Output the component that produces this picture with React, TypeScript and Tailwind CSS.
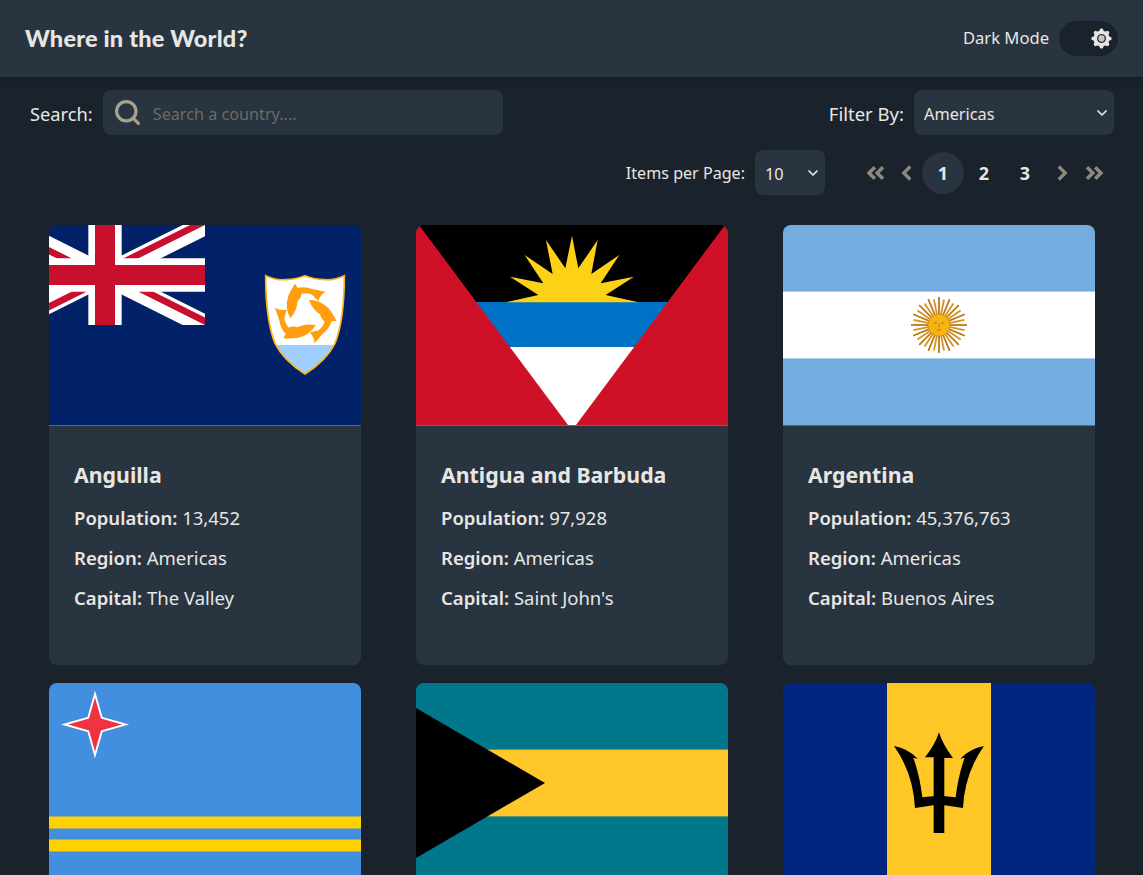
import React from "react";
import {ChevronDown, ChevronLeft, ChevronRight, ChevronsLeft, ChevronsRight, Search} from "lucide-react";

const shieldPath =
  "M32,32 Q62,46 90,44 Q125,42 150,32 Q175,42 210,44 Q238,46 268,32 C268,120 258,190 240,235 C220,275 185,305 150,327 C115,305 80,275 60,235 C42,190 32,120 32,32 Z";

function FlagAnguilla() {
  return (
    <svg viewBox="0 0 312 200" className="block w-full h-full">
      <defs>
        <clipPath id="ukA">
          <rect width="60" height="30" />
        </clipPath>
        <clipPath id="ukB">
          <path d="M30,15 h30 v15 z v15 h-30 z h-30 v-15 z v-15 h30 z" />
        </clipPath>
        <clipPath id="shieldClip">
          <path d={shieldPath} />
        </clipPath>
      </defs>
      <rect width="312" height="200" fill="#012169" />
      <g transform="translate(-44 0) scale(3.3333)" clipPath="url(#ukA)">
        <path d="M0,0 L60,30 M60,0 L0,30" stroke="#fff" strokeWidth="6" />
        <path d="M0,0 L60,30 M60,0 L0,30" stroke="#C8102E" strokeWidth="4" clipPath="url(#ukB)" />
        <path d="M30,0 v30 M0,15 h60" stroke="#fff" strokeWidth="10" />
        <path d="M30,0 v30 M0,15 h60" stroke="#C8102E" strokeWidth="6" />
      </g>
      <g transform="translate(206 40) scale(0.3333)">
        <path d={shieldPath} fill="#fff" />
        <rect x="30" y="240" width="240" height="90" fill="#9fcfff" clipPath="url(#shieldClip)" />
        <path d={shieldPath} fill="none" stroke="#fcb514" strokeWidth="5" />
        {[0, 120, 240].map((angle) => {
          return (
            <path
              key={angle}
              transform={`rotate(${angle} 150 148)`}
              d="M106,160 Q88,128 100,92 Q108,74 120,56 L128,68 Q152,64 172,72 L212,80 Q196,88 190,108 L170,88 Q152,82 140,86 Q138,100 127,110 Q127,134 106,160 Z"
              fill="#ff9e0f"
            />
          );
        })}
      </g>
    </svg>
  );
}

function FlagAntigua() {
  return (
    <svg viewBox="0 0 312 200" className="block w-full h-full">
      <rect width="312" height="200" fill="#000" />
      <rect y="77" width="312" height="45" fill="#0072c6" />
      <rect y="122" width="312" height="78" fill="#fff" />
      <g transform="translate(-6 -10) scale(0.3333)">
        <polygon
          fill="#fcd116"
          points="287,262 385,240 300,185 400,205 344,120 428,177 408,75 466,160 486,62 505,160 563,75 544,177 628,120 572,205 672,185 587,240 686,262"
        />
      </g>
      <polygon points="3,0 0,0 0,200 152,200" fill="#ce1126" />
      <polygon points="309,0 312,0 312,200 160,200" fill="#ce1126" />
    </svg>
  );
}

function FlagArgentina() {
  const rays = Array.from({length: 32}, (_, i) => i * 11.25);
  return (
    <svg viewBox="0 0 312 200" className="block w-full h-full">
      <rect width="312" height="200" fill="#74acdf" />
      <rect y="66.6" width="312" height="66.8" fill="#fff" />
      <g transform="translate(156 100)">
        {rays.map((angle, i) => {
          return (
            <line
              key={angle}
              transform={`rotate(${angle})`}
              x1="0"
              y1="-10"
              x2="0"
              y2={i % 2 ? -26 : -28}
              stroke={i % 2 ? "#d9921a" : "#b9791c"}
              strokeWidth="1.8"
            />
          );
        })}
        <circle r="11" fill="#f6b40e" stroke="#c98a12" strokeWidth="0.6" />
        <path d="M-5,-2 h3 M2,-2 h3 M0,-1 v3 M-2,5 h4" stroke="#a8660f" strokeWidth="0.8" fill="none" />
      </g>
    </svg>
  );
}

function FlagAruba() {
  return (
    <svg viewBox="0 0 312 200" className="block w-full h-full">
      <rect width="312" height="200" fill="#418fde" />
      <rect y="133.5" width="312" height="12" fill="#ffd100" />
      <rect y="156.5" width="312" height="12" fill="#ffd100" />
      <g transform="translate(46 41.5)">
        <polygon points="0,-34 7.5,-7.5 34,0 7.5,7.5 0,34 -7.5,7.5 -34,0 -7.5,-7.5" fill="#fff" />
        <polygon points="0,-27 6,-6 27,0 6,6 0,27 -6,6 -27,0 -6,-6" fill="#ef3340" />
      </g>
    </svg>
  );
}

function FlagBahamas() {
  return (
    <svg viewBox="0 0 312 200" className="block w-full h-full">
      <rect width="312" height="200" fill="#00778b" />
      <rect y="66.6" width="312" height="66.8" fill="#ffc72c" />
      <polygon points="0,25 129,100 0,175" fill="#000" />
    </svg>
  );
}

function FlagBarbados() {
  const arm = "M342,228 Q385,236 413,266 L400,263 Q420,320 427,382 L465,378 L465,405 L405,414 Q400,310 342,228 Z";
  return (
    <svg viewBox="0 0 312 200" className="block w-full h-full">
      <rect width="312" height="200" fill="#00267f" />
      <rect x="104" width="104" height="200" fill="#ffc726" />
      <g transform="translate(-3 -13) scale(0.3333)">
        <path d={arm} fill="#000" />
        <path d={arm} fill="#000" transform="translate(954 0) scale(-1 1)" />
        <path d="M461,262 H435 Q465,225 477,187 Q489,225 519,264 H493 V489 H461 Z" fill="#000" />
      </g>
    </svg>
  );
}

function IconGear() {
  const points = Array.from({length: 8}, (_, i) => i * 45);
  return (
    <svg viewBox="0 0 24 24" className="w-[21px] h-[21px]">
      <circle cx="12" cy="12" r="9" fill="#e8e6e3" />
      {points.map((angle) => {
        return <polygon key={angle} transform={`rotate(${angle} 12 12)`} points="9,4 10.8,0.5 13.2,0.5 15,4" fill="#e8e6e3" />;
      })}
      <circle cx="12" cy="12" r="4.4" fill="#c9c5bd" stroke="#283440" strokeWidth="1.6" />
    </svg>
  );
}

const countries = [
  {name: "Anguilla", population: "13,452", capital: "The Valley", flag: <FlagAnguilla />},
  {name: "Antigua and Barbuda", population: "97,928", capital: "Saint John's", flag: <FlagAntigua />},
  {name: "Argentina", population: "45,376,763", capital: "Buenos Aires", flag: <FlagArgentina />},
  {name: "Aruba", population: "106,766", capital: "Oranjestad", flag: <FlagAruba />},
  {name: "Bahamas", population: "393,248", capital: "Nassau", flag: <FlagBahamas />},
  {name: "Barbados", population: "287,371", capital: "Bridgetown", flag: <FlagBarbados />},
];

function App() {
  return (
    <div className="h-screen overflow-hidden bg-[#1a222b] text-[#e8e6e3] font-['Noto_Sans',sans-serif]">
      <header className="h-[77px] flex items-center justify-between pl-[25px] pr-[25px] bg-[#283440] shadow-md relative">
        <div className="text-[23.5px] font-black tracking-[0.2px] pt-[1px] font-['Lato',sans-serif]">Where in the World?</div>
        <div className="flex items-center -mt-[1px]">
          <span className="text-[16.6px] mr-[10px] pt-[1px]">Dark Mode</span>
          <div className="w-[59px] h-[35px] rounded-full bg-[#1a222b] flex items-center justify-end pr-[6px]">
            <IconGear />
          </div>
        </div>
      </header>

      <div className="flex items-center justify-between pl-[30px] pr-[29px] pt-[13px]">
        <div className="flex items-center">
          <label className="text-[18.3px] mr-[10px] pt-[2px]">Search:</label>
          <div className="w-[400px] h-[45px] rounded-lg bg-[#283440] flex items-center pl-[10px]">
            <Search className="w-[29px] h-[29px] text-[#a89f91] mr-[11px]" strokeWidth={2.7} />
            <input
              placeholder="Search a country...."
              className="flex-1 bg-transparent outline-none text-[16.2px] pt-[3px] placeholder:text-[#6f6a62]"
            />
          </div>
        </div>
        <div className="flex items-center">
          <label className="text-[18.5px] mr-[10px] pt-[2px]">Filter By:</label>
          <div className="relative">
            <select className="block appearance-none w-[200px] h-[45px] rounded-lg bg-[#283440] text-[16.3px] pl-[10px] pt-[3px] outline-none">
              <option>Americas</option>
            </select>
            <ChevronDown className="absolute right-[4px] top-[15px] w-[16px] h-[16px] pointer-events-none" strokeWidth={2.6} />
          </div>
        </div>
      </div>

      <div className="flex items-center justify-end pr-[33px] mt-[15px]">
        <label className="text-[16.1px] mr-[10px] pt-[1px]">Items per Page:</label>
        <div className="relative">
          <select className="block appearance-none w-[70px] h-[45px] rounded-lg bg-[#283440] text-[16.3px] pl-[10px] pt-[3px] outline-none">
            <option>10</option>
          </select>
          <ChevronDown className="absolute right-[4px] top-[15px] w-[16px] h-[16px] pointer-events-none" strokeWidth={2.6} />
        </div>
        <div className="flex items-center ml-[35px] text-[#8f887c]">
          <button className="w-[31px] h-[42px] flex items-center justify-center">
            <ChevronsLeft className="w-[28px] h-[28px]" strokeWidth={3} strokeLinecap="butt" strokeLinejoin="miter" />
          </button>
          <button className="w-[31px] h-[42px] flex items-center justify-center">
            <ChevronLeft className="w-[26px] h-[26px]" strokeWidth={3} strokeLinecap="butt" strokeLinejoin="miter" />
          </button>
          <button className="w-[42px] h-[42px] -mr-[1px] pt-[1px] rounded-full bg-[#283440] text-[18px] font-bold text-[#e8e6e3]">1</button>
          <button className="w-[42px] h-[42px] -mr-[1px] pt-[1px] rounded-full text-[18px] font-bold text-[#e8e6e3]">2</button>
          <button className="w-[42px] h-[42px] pt-[1px] rounded-full text-[18px] font-bold text-[#e8e6e3]">3</button>
          <button className="w-[32px] h-[42px] flex items-center justify-center">
            <ChevronRight className="w-[26px] h-[26px]" strokeWidth={3} strokeLinecap="butt" strokeLinejoin="miter" />
          </button>
          <button className="w-[32px] h-[42px] flex items-center justify-center">
            <ChevronsRight className="w-[28px] h-[28px]" strokeWidth={3} strokeLinecap="butt" strokeLinejoin="miter" />
          </button>
        </div>
      </div>

      <div className="grid grid-cols-[repeat(3,312px)] gap-x-[55px] gap-y-[18px] pl-[49px] mt-[30px]">
        {countries.map((item) => {
          return (
            <div key={item.name} className="h-[440px] rounded-lg overflow-hidden bg-[#283440]">
              <div className="h-[201px] border-b border-[#6b675f]">{item.flag}</div>
              <div className="px-[25px] pt-[33px] text-[18.5px]">
                <div className="text-[21.3px] font-bold leading-[32px] mb-[7px]">{item.name}</div>
                <div className="h-[40px] leading-[40px]">
                  <span className="font-semibold">Population:</span> {item.population}
                </div>
                <div className="h-[40px] leading-[40px]">
                  <span className="font-semibold">Region:</span> Americas
                </div>
                <div className="h-[40px] leading-[40px]">
                  <span className="font-semibold">Capital:</span> {item.capital}
                </div>
              </div>
            </div>
          );
        })}
      </div>
    </div>
  );
}

export default App;
